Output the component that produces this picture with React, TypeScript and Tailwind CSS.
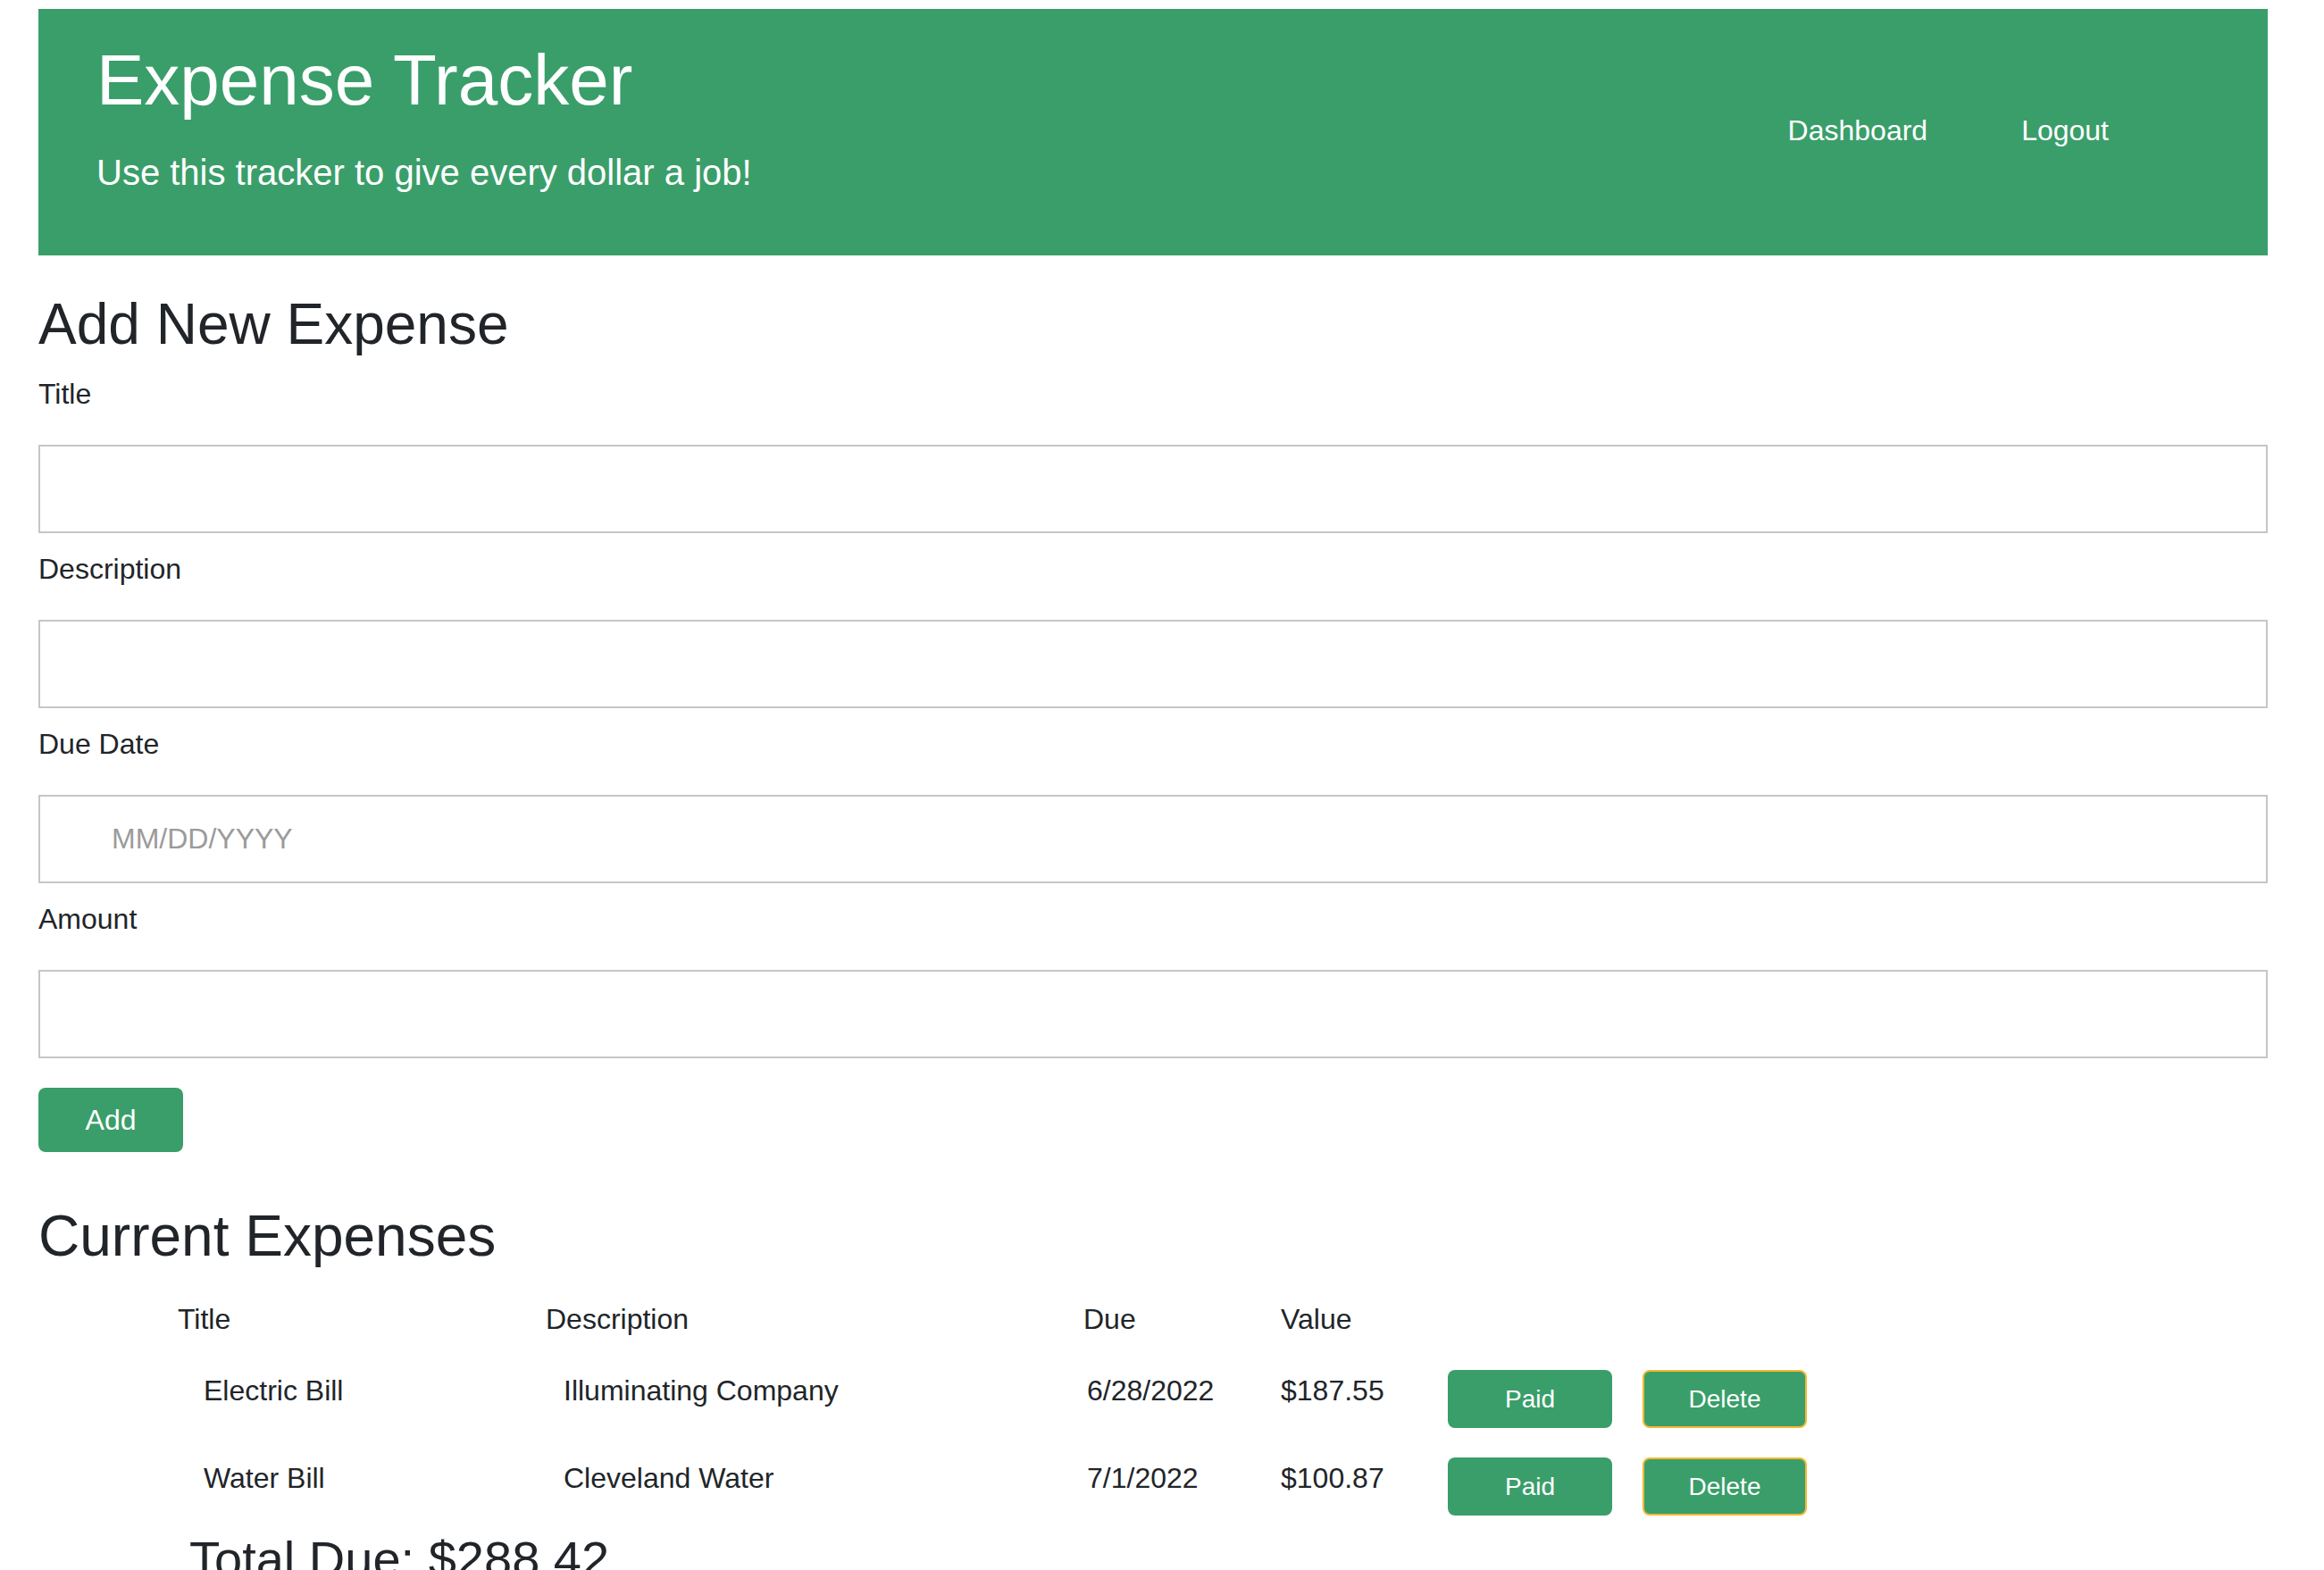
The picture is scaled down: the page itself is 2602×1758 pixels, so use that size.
import React from "react";

type Expense = {
  title: string;
  description: string;
  due: string;
  value: string;
};

const expenses: Expense[] = [
  { title: "Electric Bill", description: "Illuminating Company", due: "6/28/2022", value: "$187.55" },
  { title: "Water Bill", description: "Cleveland Water", due: "7/1/2022", value: "$100.87" },
];

const fields = [
  { label: "Title", placeholder: "" },
  { label: "Description", placeholder: "" },
  { label: "Due Date", placeholder: "MM/DD/YYYY" },
  { label: "Amount", placeholder: "" },
];

function Header() {
  return (
    <header className="mt-[10px] flex h-[276px] justify-between bg-[#3a9e6a] text-white">
      <div className="pl-[65px] pt-[32px]">
        <h1 className="text-[80px] leading-[96px] font-normal">Expense Tracker</h1>
        <p className="mt-[25px] text-[40px] leading-[60px]">Use this tracker to give every dollar a job!</p>
      </div>
      {/* Nav links */}
      <nav className="flex items-start gap-[105px] pr-[178px] pt-[112px] text-[32px] leading-[48px]">
        <a href="#">Dashboard</a>
        <a href="#">Logout</a>
      </nav>
    </header>
  );
}

function ExpenseForm() {
  return (
    <section className="mt-[39px]">
      <h2 className="mb-[15px] text-[64px] leading-[77px] text-[#212529]">Add New Expense</h2>
      <form className="flex flex-col gap-[16px]" onSubmit={(e) => e.preventDefault()}>
        {fields.map((f) => (
          <div key={f.label} className="flex flex-col">
            <label className="text-[32px] leading-[48px] text-[#212529]">{f.label}</label>
            <input
              type="text"
              placeholder={f.placeholder}
              className="mt-[33px] h-[99px] w-full border-2 border-[#c6c6c6] bg-white pl-[80px] text-[32px] text-[#212529] outline-none placeholder:text-[#9b9b9b]"
            />
          </div>
        ))}
      </form>
      <button className="mt-[33px] h-[72px] w-[162px] rounded-[8px] bg-[#3a9e6a] text-[32px] text-white">
        Add
      </button>
    </section>
  );
}

function ExpenseTable() {
  return (
    <section className="mt-[56px] text-[#212529]">
      <h2 className="text-[64px] leading-[77px]">Current Expenses</h2>
      <div className="ml-[156px] mt-[30px]">
        <div className="grid grid-cols-[412px_602px_221px_187px_218px_184px] text-[32px] leading-[48px]">
          <div>Title</div>
          <div>Description</div>
          <div>Due</div>
          <div>Value</div>
          <div />
          <div />
        </div>
        <div className="mt-[32px] flex flex-col gap-[32px]">
          {expenses.map((x) => (
            <div
              key={x.title}
              className="grid grid-cols-[412px_602px_221px_187px_218px_184px] items-start text-[32px] leading-[48px]"
            >
              <div className="pl-[29px]">{x.title}</div>
              <div className="pl-[20px]">{x.description}</div>
              <div className="pl-[4px]">{x.due}</div>
              <div>{x.value}</div>
              <div className="pt-[1px]">
                <button className="h-[65px] w-[184px] rounded-[8px] bg-[#3a9e6a] text-[28px] text-white">Paid</button>
              </div>
              <div className="pt-[1px]">
                <button className="h-[65px] w-[184px] rounded-[8px] border-2 border-[#f5b732] bg-[#3a9e6a] text-[28px] text-white">
                  Delete
                </button>
              </div>
            </div>
          ))}
        </div>
        <h3 className="ml-[13px] mt-[15px] text-[56px] leading-[67px]">Total Due: $288.42</h3>
      </div>
    </section>
  );
}

export default function App() {
  return (
    <div className="min-h-screen bg-white font-['Liberation_Sans',Arial,sans-serif]">
      <div className="ml-[43px] w-[2496px]">
        <Header />
        <ExpenseForm />
        <ExpenseTable />
      </div>
    </div>
  );
}
